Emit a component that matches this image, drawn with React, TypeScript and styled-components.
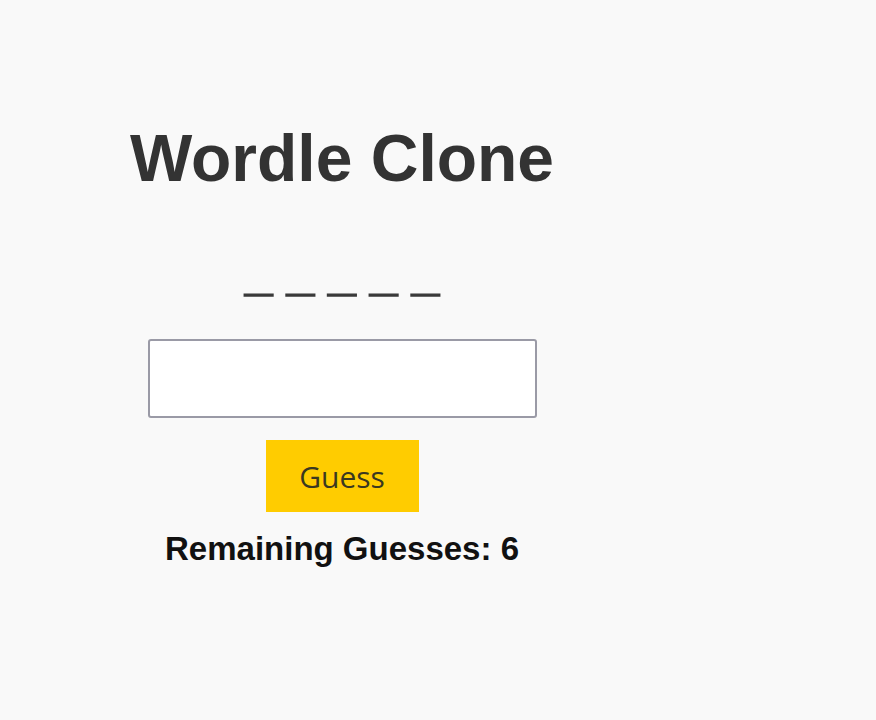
import React, { useState } from "react";
import styled, { createGlobalStyle } from "styled-components";

const GlobalStyle = createGlobalStyle`
  html, body {
    margin: 0;
    padding: 0;
    background: #f9f9f9;
  }
  body {
    font-family: "Liberation Sans", Arial, sans-serif;
  }
`;

const Page = styled.div`
  width: 684px;
  display: flex;
  flex-direction: column;
  align-items: center;
  padding-top: 125px;
`;

const Title = styled.h1`
  margin: 0;
  font-size: 66px;
  line-height: 1;
  font-weight: 700;
  color: #333;
`;

const Blanks = styled.div`
  margin-top: 57px;
  font-size: 50px;
  line-height: 1;
  font-weight: 700;
  color: #383838;
  -webkit-text-stroke: 1.4px #383838;
  white-space: pre;
`;

const GuessInput = styled.input`
  box-sizing: border-box;
  margin-top: 41px;
  width: 389px;
  height: 79px;
  border: 2px solid #9a9aa6;
  border-radius: 3px;
  background: #fff;
  font-size: 30px;
  padding: 0 12px;
  outline: none;
`;

const GuessButton = styled.button`
  margin-top: 22px;
  width: 153px;
  height: 72px;
  border: none;
  background: #ffcc00;
  color: #3a3820;
  font-family: "Open Sans", "DejaVu Sans", sans-serif;
  font-size: 30px;
  cursor: pointer;
`;

const Remaining = styled.p`
  margin: 20px 0 0;
  font-size: 33px;
  line-height: 1;
  padding-bottom: 8px;
  font-weight: 700;
  color: #111;
`;

export default function App() {
  const [guess, setGuess] = useState("");
  const [remaining, setRemaining] = useState(6);

  return (
    <>
      <GlobalStyle />
      <Page>
        <Title>Wordle Clone</Title>
        <Blanks>{"_ _ _ _ _"}</Blanks>
        <GuessInput
          value={guess}
          maxLength={5}
          onChange={(e) => setGuess(e.target.value)}
        />
        <GuessButton
          onClick={() => {
            if (guess.length === 5 && remaining > 0) {
              setRemaining(remaining - 1);
              setGuess("");
            }
          }}
        >
          Guess
        </GuessButton>
        <Remaining>Remaining Guesses: {remaining}</Remaining>
      </Page>
    </>
  );
}
